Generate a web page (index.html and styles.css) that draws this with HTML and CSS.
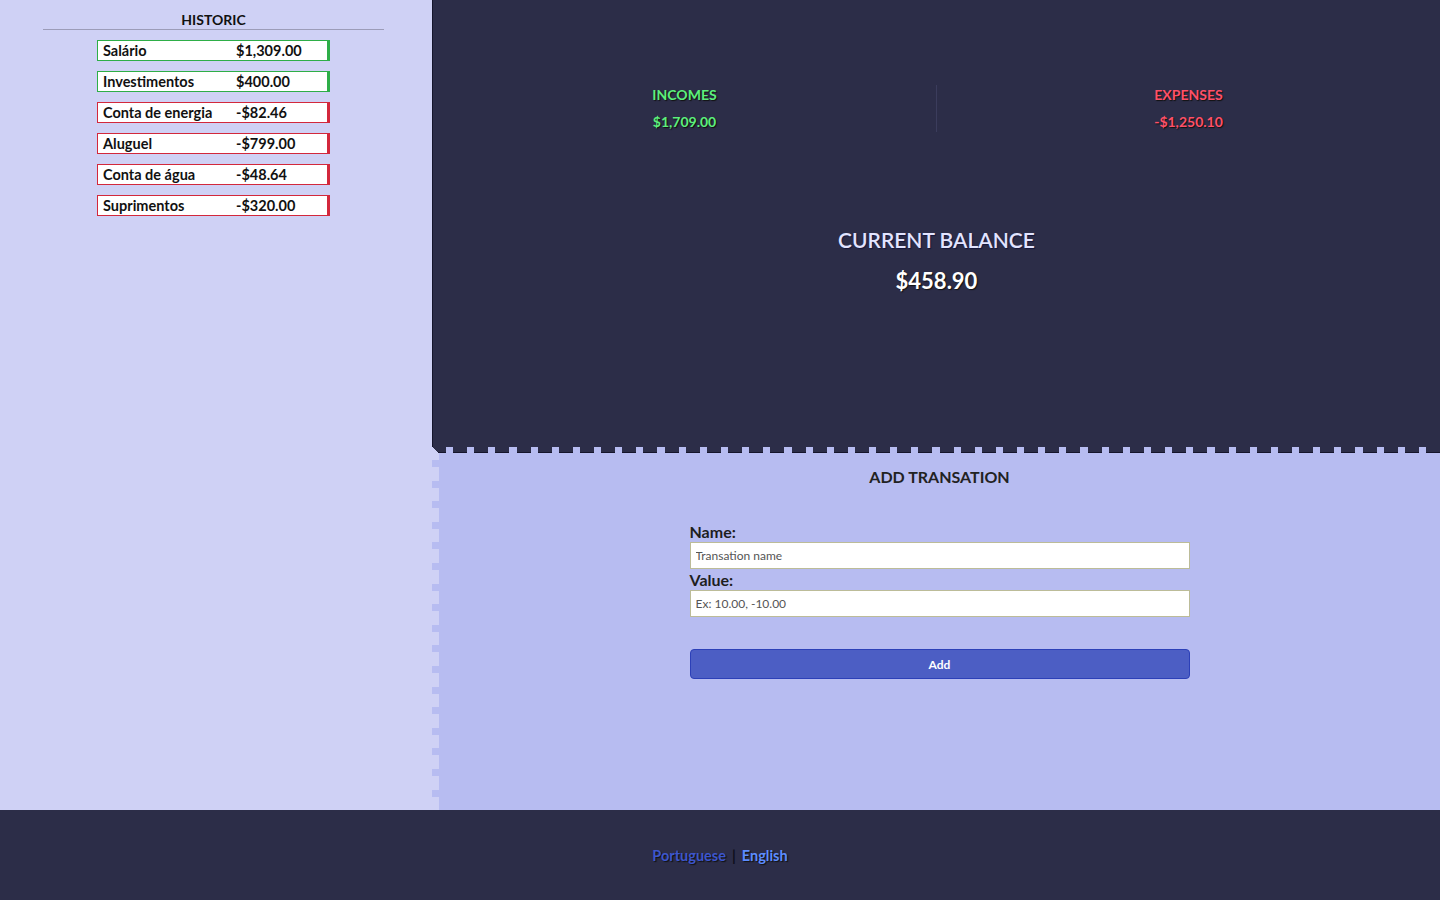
FILE: index.html
```html
<!DOCTYPE html>
<html lang="pt">
<head>
<meta charset="utf-8">
<title>Finance</title>
<link rel="stylesheet" href="styles.css">
</head>
<body>
<div class="app">
  <aside class="sidebar">
    <div class="sidebar-inner">
      <h2 class="hist-title">HISTORIC</h2>
      <div class="hist-rule"></div>
      <ul class="hist-list">
        <li class="item plus"><span class="name">Salário</span><span class="val">$1,309.00</span></li>
        <li class="item plus"><span class="name">Investimentos</span><span class="val">$400.00</span></li>
        <li class="item minus"><span class="name">Conta de energia</span><span class="val">-$82.46</span></li>
        <li class="item minus"><span class="name">Aluguel</span><span class="val">-$799.00</span></li>
        <li class="item minus"><span class="name">Conta de água</span><span class="val">-$48.64</span></li>
        <li class="item minus"><span class="name">Suprimentos</span><span class="val">-$320.00</span></li>
      </ul>
    </div>
  </aside>
  <main class="main">
    <section class="summary">
      <div class="stats">
        <div class="stat incomes">
          <div class="stat-label">INCOMES</div>
          <div class="stat-value">$1,709.00</div>
        </div>
        <div class="stat expenses">
          <div class="stat-label">EXPENSES</div>
          <div class="stat-value">-$1,250.10</div>
        </div>
      </div>
      <div class="balance">
        <div class="balance-title">CURRENT BALANCE</div>
        <div class="balance-value">$458.90</div>
      </div>
    </section>
    <div class="notch-top"></div>
    <section class="form-area">
      <div class="notch-left"></div>
      <div class="form-wrap">
        <h2 class="form-title">ADD TRANSATION</h2>
        <form class="form">
          <label class="label" for="name">Name:</label>
          <input class="input" id="name" type="text" placeholder="Transation name">
          <label class="label" for="value">Value:</label>
          <input class="input" id="value" type="text" placeholder="Ex: 10.00, -10.00">
          <button class="btn" type="button">Add</button>
        </form>
      </div>
    </section>
  </main>
  <footer class="footer">
    <a class="lang pt" href="#">Portuguese</a>
    <span class="sep">|</span>
    <a class="lang en" href="#">English</a>
  </footer>
</div>
</body>
</html>
```

FILE: styles.css
```css
* { box-sizing: border-box; }
html, body { margin: 0; padding: 0; }
body {
  width: 1440px;
  height: 900px;
  overflow: hidden;
  font-family: Lato, "Open Sans", "Liberation Sans", sans-serif;
  background: #2c2d48;
}
.app {
  display: grid;
  grid-template-columns: 432px 1fr;
  grid-template-rows: 810px 90px;
}

/* Sidebar */
.sidebar {
  background: #cfd1f5;
}
.sidebar-inner {
  width: 427px;
  padding-top: 11px;
  display: flex;
  flex-direction: column;
  align-items: center;
}
.hist-title {
  margin: 0;
  font-size: 14px;
  line-height: 18px;
  font-weight: 700;
  color: #111;
}
.hist-rule {
  width: 341px;
  height: 1px;
  background: #9c9cb8;
}
.hist-list {
  list-style: none;
  margin: 10px 0 0;
  padding: 0;
  display: flex;
  flex-direction: column;
  gap: 10px;
}
.item {
  width: 233px;
  height: 21px;
  background: #fff;
  display: flex;
  align-items: center;
  padding-left: 5px;
  font-size: 14.5px;
  font-weight: 700;
  color: #111;
}
.item.plus { border: 1px solid #2eae48; border-right-width: 3px; }
.item.minus { border: 1px solid #d3283c; border-right-width: 3px; }
.name { width: 133px; }

/* Main */
.main {
  display: flex;
  flex-direction: column;
}
.summary {
  height: 447px;
  background: #2c2d48;
  border-left: 1px solid #15152c;
  padding-top: 85px;
}
.stats {
  display: flex;
}
.stat {
  flex: 1;
  height: 47px;
  display: flex;
  flex-direction: column;
  align-items: center;
  gap: 7px;
  font-size: 14px;
  font-weight: 700;
  line-height: 20px;
}
.stat.incomes {
  border-right: 1px solid #3b3c5c;
  color: #5cf07c;
}
.stat.expenses { color: #ff5068; }
.stat-label, .stat-value { text-shadow: 1px 1px 1px #111; }
.balance {
  margin-top: 95px;
  display: flex;
  flex-direction: column;
  align-items: center;
  gap: 14px;
}
.balance-title {
  font-size: 21px;
  line-height: 26px;
  font-weight: 600;
  color: #e2e4ff;
  text-shadow: 1px 1px 1px #15153a;
}
.balance-value {
  font-size: 22px;
  line-height: 28px;
  font-weight: 700;
  color: #fff;
  text-shadow: 1px 1px 1px #111;
}

.notch-top {
  height: 6px;
  background:
    linear-gradient(to top right, #cfd1f5 50%, transparent 50%) left top / 7px 6px no-repeat,
    linear-gradient(#15152c, #15152c) left bottom / 100% 1px no-repeat,
    repeating-linear-gradient(to right, #2c2d48 0 14px, #b7bcf1 14px 21.15px);
  background-blend-mode: normal;
  position: relative;
}
.notch-top::after {
  content: "";
  position: absolute;
  left: 0;
  right: 0;
  bottom: 0;
  height: 1px;
  background: repeating-linear-gradient(to right, transparent 0 14px, #b7bcf1 14px 21.15px);
}
.form-area {
  flex: 1;
  display: flex;
  background: #b7bcf1;
}
.notch-left {
  width: 7px;
  background: repeating-linear-gradient(to bottom, #cfd1f5 0 7px, #b7bcf1 7px 14px, #cfd1f5 14px 20.6px);
}
.form-wrap {
  flex: 1;
  padding-top: 14px;
  display: flex;
  flex-direction: column;
  align-items: center;
}
.form-title {
  margin: 0;
  font-size: 16px;
  line-height: 20px;
  font-weight: 700;
  color: #222;
}
.form {
  width: 500px;
  margin-top: 35px;
  display: flex;
  flex-direction: column;
}
.label {
  font-size: 16px;
  line-height: 20px;
  font-weight: 700;
  color: #1e1e1e;
}
.input {
  height: 27px;
  margin: 0 0 1px;
  padding: 0 5px;
  border: 1px solid #bcbc98;
  background: #fff;
  font-family: inherit;
  font-size: 12px;
  color: #333;
  outline: none;
}
.input::placeholder { color: #555; }
.btn {
  margin-top: 31px;
  height: 30px;
  border: 1px solid #2c40b8;
  border-radius: 4px;
  background: #4c5ec4;
  color: #fff;
  font-family: inherit;
  font-size: 12px;
  font-weight: 700;
}

/* Footer */
.footer {
  grid-column: 1 / 3;
  background: #2c2d48;
  display: flex;
  justify-content: center;
  align-items: flex-start;
  gap: 6px;
  padding-top: 36px;
  font-size: 14.5px;
  font-weight: 700;
  line-height: 20px;
}
.lang { text-decoration: none; text-shadow: 1px 1px 1px #111; }
.lang.pt { color: #3d56cc; }
.lang.en { color: #5d8dff; }
.sep { color: #0d0d1a; }
```
